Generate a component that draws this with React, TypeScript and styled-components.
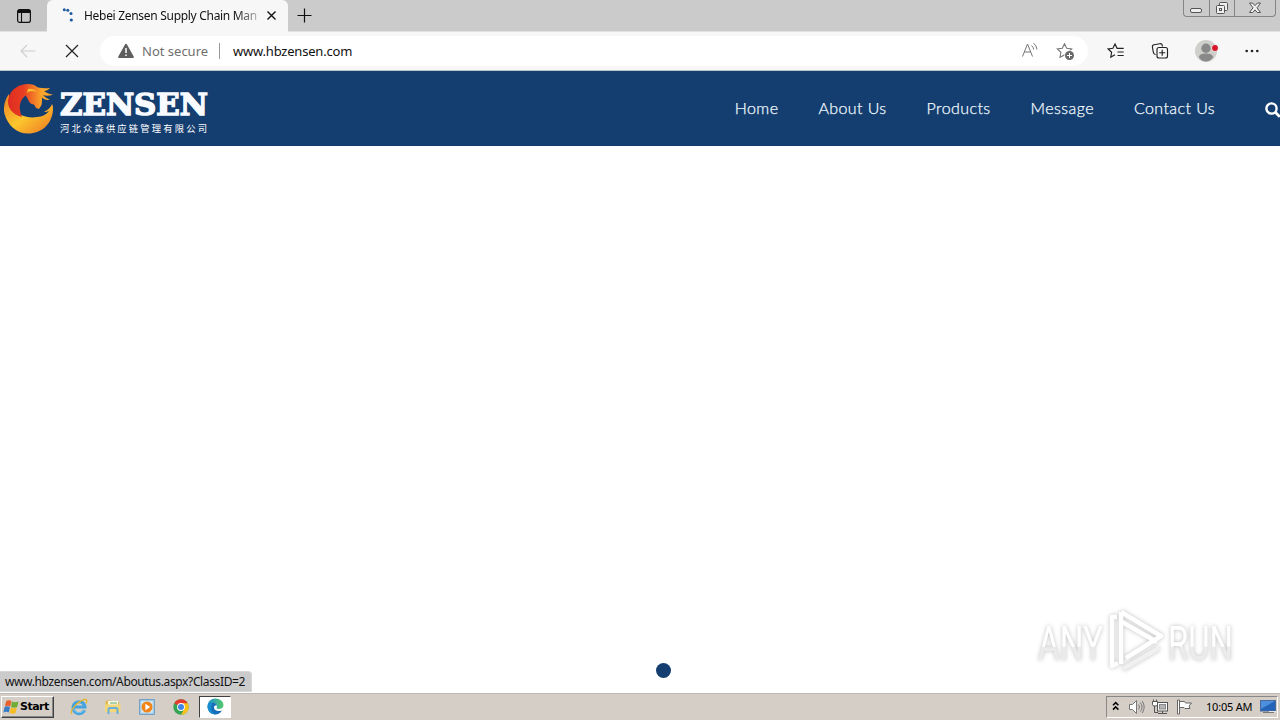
import styled, { createGlobalStyle, css } from "styled-components";

const navItems = ["Home", "About Us", "Products", "Message", "Contact Us"];

export default function App() {
  return (
    <>
      <GlobalStyle />
      <Desktop>
        <TabStrip>
          <TabActions>
            <svg width="16" height="16" viewBox="0 0 16 16">
              <rect x="1.6" y="1.6" width="12.8" height="12.8" rx="2.2" fill="none" stroke="#111" strokeWidth="1.2" />
              <path d="M1.5 5V3.5a2 2 0 0 1 2-2h9a2 2 0 0 1 2 2V5z" fill="#111" />
              <path d="M5.5 5v9" stroke="#111" strokeWidth="1.1" />
            </svg>
          </TabActions>
          <Tab>
            <svg width="12" height="15" viewBox="0 0 12 15" fill="#1e5aa0">
              <circle cx="2.3" cy="1.8" r="1.5" />
              <circle cx="5.8" cy="2.2" r="1.5" />
              <circle cx="9" cy="5.4" r="1.5" />
              <circle cx="9.3" cy="12" r="1.6" />
            </svg>
            <TabTitle>Hebei Zensen Supply Chain Man</TabTitle>
            <svg width="11" height="11" viewBox="0 0 11 11">
              <path d="M1.5 1.5l8 8M9.5 1.5l-8 8" stroke="#111" strokeWidth="1.4" />
            </svg>
          </Tab>
          <NewTab>
            <svg width="15" height="15" viewBox="0 0 15 15">
              <path d="M7.5 .5v14M.5 7.5h14" stroke="#111" strokeWidth="1.2" />
            </svg>
          </NewTab>
          <WindowButtons>
            <WindowButton $width={25}>
              <svg width="14" height="14" viewBox="0 0 14 14">
                <rect x="1.5" y="7.5" width="11" height="4" rx="1.5" fill="#eee" stroke="#555" />
              </svg>
            </WindowButton>
            <WindowButton $width={25}>
              <svg width="14" height="14" viewBox="0 0 14 14" fill="#eee" stroke="#555">
                <rect x="4.5" y="1.5" width="8" height="8" rx="1" />
                <rect x="1.5" y="4.5" width="8" height="8" rx="1" />
                <rect x="4.5" y="7.5" width="2" height="2" />
              </svg>
            </WindowButton>
            <WindowButton $width={41}>
              <svg width="14" height="14" viewBox="0 0 14 14">
                <path
                  d="M1.5 2h3.2L7 4.7 9.3 2h3.2L9 6.8l3.5 4.7H9.3L7 8.9l-2.3 2.6H1.5L5 6.8z"
                  fill="#eee"
                  stroke="#555"
                />
              </svg>
            </WindowButton>
          </WindowButtons>
        </TabStrip>

        <Toolbar>
          <ToolIcon $width={16} $left={20}>
            <svg width="16" height="14" viewBox="0 0 16 14">
              <path d="M15.5 7H1M7 1L1 7l6 6" fill="none" stroke="#cdcdcd" strokeWidth="1.1" />
            </svg>
          </ToolIcon>
          <ToolIcon $width={14} $left={29}>
            <svg width="14" height="14" viewBox="0 0 14 14">
              <path d="M1 1l12 12M13 1L1 13" stroke="#222" strokeWidth="1.2" />
            </svg>
          </ToolIcon>
          <AddressBar>
            <svg width="16" height="16" viewBox="0 0 16 16">
              <path d="M8 .8c.5 0 .8.2 1 .6l6.7 12c.4.8 0 1.6-.9 1.6H1.2c-.9 0-1.3-.8-.9-1.6L7 1.4c.2-.4.5-.6 1-.6z" fill="#5f5f5f" />
              <path d="M8 5v5M8 11.5v1.6" stroke="#fff" strokeWidth="1.5" />
            </svg>
            <Security>Not secure</Security>
            <Url>www.hbzensen.com</Url>
            <AddressTools>
              <svg width="18" height="16" viewBox="0 0 18 16" fill="none" stroke="#777" strokeWidth="1">
                <path d="M1.5 14.5L6.5 2l5 12.5M3.3 10h6.4M10.5 3.5q2 1.5 2.2 4M12.5 1.2q3.2 2.3 3.5 6.3" />
              </svg>
              <svg width="19" height="19" viewBox="0 0 19 19">
                <path
                  d="M8.5 1.7l2.2 4.5 5 .7-3.6 3.4.9 5-4.5-2.4L4 15.3l.9-5L1.3 6.9l5-.7z"
                  fill="none"
                  stroke="#777"
                  strokeWidth="1.1"
                />
                <circle cx="13.5" cy="13.5" r="5.2" fill="#fff" />
                <circle cx="13.5" cy="13.5" r="4.5" fill="#686868" />
                <path d="M13.5 11v5M11 13.5h5" stroke="#fff" />
              </svg>
            </AddressTools>
          </AddressBar>
          <ToolIcon $width={18} $left={19}>
            <svg width="18" height="18" viewBox="0 0 18 18" fill="none" stroke="#222" strokeWidth="1.15">
              <path d="M10 6.3L8 2 5.9 6.3l-4.7.7 3.4 3.3-.8 4.8L8 12.8M8 2l2.1 4.3h6.6M10.5 10h6.2M10.5 13.5h6.2" />
            </svg>
          </ToolIcon>
          <ToolIcon $width={18} $left={26}>
            <svg width="18" height="18" viewBox="0 0 18 18" fill="none" stroke="#222" strokeWidth="1.15">
              <path d="M4.5 12.6C3 12.5 2.5 11.5 2.3 10.2L1.4 5C1.2 3.7 2 3 3.1 2.8l5.7-1.1c1.2-.2 2.2.3 2.5 1.7l.2 1.1" />
              <rect x="6" y="5.5" width="10.5" height="10.5" rx="2" />
              <path d="M11.2 7.7v6M8.2 10.7h6" />
            </svg>
          </ToolIcon>
          <ToolIcon $width={24} $left={26}>
            <svg width="24" height="22" viewBox="0 0 24 22">
              <circle cx="11" cy="11" r="11" fill="#cfcfcb" />
              <circle cx="11" cy="8.2" r="4.7" fill="#898989" />
              <path d="M3.8 17c1-3 3.7-3.5 7.2-3.5s6.2.5 7.2 3.5c-2 3-4.4 4.5-7.2 4.5S5.5 20 3.8 17z" fill="#898989" />
              <circle cx="20" cy="8" r="3.5" fill="#e9e4e2" />
              <circle cx="20" cy="8" r="2.9" fill="#dc1428" />
            </svg>
          </ToolIcon>
          <ToolIcon $width={14} $left={26}>
            <svg width="14" height="4" viewBox="0 0 14 4" fill="#222">
              <circle cx="1.7" cy="2" r="1.3" />
              <circle cx="7" cy="2" r="1.3" />
              <circle cx="12.3" cy="2" r="1.3" />
            </svg>
          </ToolIcon>
        </Toolbar>

        <SiteHeader>
          <Logo />
          <Nav>
            {navItems.map((item) => (
              <NavLink key={item}>{item}</NavLink>
            ))}
          </Nav>
          <SearchButton>
            <svg width="16" height="16" viewBox="0 0 16 16">
              <circle cx="6.5" cy="6.5" r="5.1" fill="none" stroke="#fff" strokeWidth="2.4" />
              <path d="M10.3 10.3l4.5 4.5" stroke="#fff" strokeWidth="2.8" />
            </svg>
          </SearchButton>
        </SiteHeader>

        <Page>
          <SliderDot />
          <StatusBubble>www.hbzensen.com/Aboutus.aspx?ClassID=2</StatusBubble>
          <Watermark />
        </Page>

        <Taskbar>
          <StartButton>
            <WindowsFlag />
            Start
          </StartButton>
          <TaskButton>
            <ExplorerIcon />
          </TaskButton>
          <TaskButton>
            <FolderIcon />
          </TaskButton>
          <TaskButton>
            <PlayerIcon />
          </TaskButton>
          <TaskButton>
            <ChromeIcon />
          </TaskButton>
          <TaskButton $active>
            <EdgeIcon />
          </TaskButton>
          <Tray>
            <Chevrons width="8" height="10" viewBox="0 0 8 10" fill="none" stroke="#000" strokeWidth="1.5">
              <path d="M1 4.3L3.7 1.6l2.7 2.7M1 8.6l2.7-2.7 2.7 2.7" />
            </Chevrons>
            <SpeakerIcon />
            <NetworkIcon />
            <FlagIcon />
            <Clock>10:05 AM</Clock>
            <svg width="17" height="14" viewBox="0 0 17 14">
              <rect x=".5" y=".5" width="15" height="10.5" fill="#2463b8" stroke="#4a6a9c" />
              <path d="M1 1h14L1 9z" fill="#4b8fdd" />
              <path d="M3 12.5h11" stroke="#777" />
              <path d="M9 11.5h7" stroke="#e8e8e8" />
            </svg>
          </Tray>
        </Taskbar>
      </Desktop>
    </>
  );
}

function Logo() {
  return (
    <LogoLink>
      <svg width="212" height="56" viewBox="0 0 212 56">
        <defs>
          <linearGradient id="ring" x1="0" y1="0" x2="1" y2="1">
            <stop offset="0" stopColor="#ef7d22" />
            <stop offset=".5" stopColor="#fbc62e" />
            <stop offset="1" stopColor="#ee7421" />
          </linearGradient>
          <linearGradient id="mane" x1="0" y1="0" x2="1" y2="0">
            <stop offset="0" stopColor="#df2c22" />
            <stop offset=".35" stopColor="#e83f22" />
            <stop offset=".75" stopColor="#fba52b" />
          </linearGradient>
        </defs>
        <path
          d="M9 14C5 19 3 27 4.5 34 8 46 17 53.500 28 53.5 42 53.5 52 44 53 30c.2-3-.2-4-1-6-1 3-4 6-8 8 2 0 4-.5 5-1-2 3-7 6-12 6-6 1-11 0-16-2C13 35 9 27 9 14z"
          fill="url(#ring)"
        />
        <path
          d="M22 37C13 35 6 27 8.5 18 11 9 19 4 28 4c4 0 7 1 10 3.500 4 .8 8 1 12 .5-1.5 2-4 3-6 3 3 2 6 3.500 9 3.500-3 1.500-7 1.500-10 .5 2 2 4 4 7 4.500-3 1-6 0-8-2 0 3 0 5-.5 7.500L39 29l-3-1-2-3.500c-2 0-4-1-5-3l-2-4-1.500-2C21 19 19 25 20 30c.5 3 1 5 2 7z"
          fill="url(#mane)"
        />
        <path d="M27 13l1-4q5-1 9 3l-4-1q-4-.5-6 2z" fill="#fac22f" />
        <text
          x="60"
          y="34.5"
          textLength="148"
          lengthAdjust="spacingAndGlyphs"
          fill="#f7fbff"
          stroke="#f7fbff"
          strokeWidth="1.5"
          fontFamily="DejaVu Serif, serif"
          fontWeight="700"
          fontSize="30"
        >
          ZENSEN
        </text>
        <text
          x="60"
          y="51.5"
          textLength="147"
          fill="#fff"
          fontFamily="Noto Sans CJK SC, sans-serif"
          fontWeight="400"
          fontSize="9.3"
        >
          河北众森供应链管理有限公司
        </text>
      </svg>
    </LogoLink>
  );
}

function Watermark() {
  return (
    <WatermarkBox>
      <svg width="220" height="72" viewBox="0 0 220 72">
        <defs>
          <linearGradient id="fade" x1="0" y1="0" x2="0" y2="1">
            <stop offset=".55" stopColor="#fff" />
            <stop offset=".56" stopColor="#ebebeb" />
          </linearGradient>
        </defs>
        <g fill="url(#fade)" fontFamily="Roboto, sans-serif" fontSize="49" fontWeight="400">
          <text x="7" y="54" textLength="65" lengthAdjust="spacingAndGlyphs">ANY</text>
          <text x="137" y="54" textLength="65" lengthAdjust="spacingAndGlyphs">RUN</text>
        </g>
        <g fill="none" stroke="#fff" strokeWidth="4.5" strokeLinejoin="round">
          <path d="M86 11h-5v49l6-3" />
          <path d="M90 6v52M90 6l40 24-35 22M91 16l35 20" />
          <path d="M92 63l36-21" stroke="#f0f0f0" />
        </g>
      </svg>
    </WatermarkBox>
  );
}

function WindowsFlag() {
  return (
    <svg width="16" height="16" viewBox="0 0 16 16">
      <path d="M3.2 2q2.6-1.6 5.2 0L7.3 7.4q-2.6-1.5-5.4 0z" fill="#e9602a" />
      <path d="M9 2.5q3.2 1.5 6.5 0l-1.3 5.4q-2.9 1.5-6.2 0z" fill="#6fad35" />
      <path d="M1.6 8.1q2.8-1.5 5.4 0l-1.2 5.3q-2.8-1.5-5.4 0z" fill="#397bc5" />
      <path d="M7.7 8.6q3 1.5 6.2 0l-1.3 5.5q-3 1.5-6.1 0z" fill="#f6bd26" />
    </svg>
  );
}

function ExplorerIcon() {
  return (
    <svg width="18" height="18" viewBox="0 0 18 18" fill="none">
      <path d="M14.5 12.2A6 6 0 1 1 15 9H4" stroke="#43a3df" strokeWidth="3" />
      <path d="M14 12.3A6 6 0 0 1 3.5 11" stroke="#7cc8f0" strokeWidth="1" />
      <path d="M2 16C-1 13 8 3 14.5 1.5c3-.6 2.5 2 1.5 4" stroke="#e5b42d" strokeWidth="1.3" />
    </svg>
  );
}

function FolderIcon() {
  return (
    <svg width="18" height="16" viewBox="0 0 18 16">
      <path d="M1.5 2.5l1-1h4l1 1.5h7.5v10h-13.5z" fill="#dfba4d" />
      <path d="M4 2h10v5H4z" fill="#f9f5df" />
      <path d="M6 4h7" stroke="#59ae75" />
      <path d="M1 5.5h15.5V13H1z" fill="#f3d679" />
      <path d="M4.5 15v-4.5Q4.500 9 6 9h6q1.500 0 1.500 1.500V15" fill="none" stroke="#69b0d8" strokeWidth="2" />
    </svg>
  );
}

function PlayerIcon() {
  return (
    <svg width="16" height="16" viewBox="0 0 16 16">
      <rect x=".7" y=".7" width="14.6" height="14.6" fill="#b6d7ed" stroke="#6096c4" />
      <rect x="2.5" y="2.5" width="11" height="11" fill="#d8e9f4" />
      <circle cx="8" cy="8" r="5.5" fill="#f28418" />
      <path d="M6.4 4.8L11.2 8l-4.8 3.2z" fill="#fff" />
    </svg>
  );
}

function ChromeIcon() {
  return (
    <svg width="16" height="16" viewBox="0 0 16 16">
      <circle cx="8" cy="8" r="7.7" fill="#34a353" />
      <path d="M8 8L1.3 4.2A7.7 7.7 0 0 1 14.7 4.2z" fill="#e33b2e" />
      <path d="M8 4.2h6.7A7.7 7.7 0 0 1 8 15.7L11.3 10z" fill="#fbc116" />
      <circle cx="8" cy="8" r="3.9" fill="#fff" />
      <circle cx="8" cy="8" r="3" fill="#4285e8" />
    </svg>
  );
}

function EdgeIcon() {
  return (
    <svg width="17" height="17" viewBox="0 0 17 17">
      <defs>
        <linearGradient id="edge" x1="0" y1="0" x2="1" y2="0">
          <stop offset="0" stopColor="#208fd4" />
          <stop offset="1" stopColor="#55ca69" />
        </linearGradient>
      </defs>
      <path d="M.5 8.5C.5 3.7 4 .5 8.5.5s8 3 8 6.5c0 2.5-2 4-4.5 4-1.8 0-2.8-.7-2.3-1.5.5-.9.7-3.5-2.2-4C4 5 1.5 7 .5 8.5z" fill="url(#edge)" />
      <path d="M.5 8.5C1 6 3.5 4.5 6 4.7 8 4.8 10 6 10 8c-1-1-3-.5-3 1.5 0 3 3.5 4.5 8 3-1.5 2.5-4 4-6.5 4-4.5 0-8-3.6-8-8z" fill="#176eb9" />
      <path d="M5 7c-2 3-.5 7.5 3.5 9.5-4.5 0-8-3.6-8-8C1 6.5 3 5 5 5z" fill="#168ed0" />
    </svg>
  );
}

function SpeakerIcon() {
  return (
    <svg width="17" height="16" viewBox="0 0 17 16" fill="none" stroke="#777">
      <path d="M1.5 5.5h3l4-4v13l-4-4h-3z" fill="#fff" />
      <path d="M10.5 5.5q2 2.5 0 5M12.3 3.5q3.5 4.5 0 9M14.2 2q4 6 0 12" />
    </svg>
  );
}

function NetworkIcon() {
  return (
    <svg width="17" height="16" viewBox="0 0 17 16" stroke="#555">
      <rect x="5.5" y="3.5" width="10" height="8.5" fill="#fff" />
      <rect x="7.5" y="5.5" width="6" height="4.5" fill="#b5b5b5" stroke="#888" />
      <path d="M6 14.5h9M10.5 12v2" />
      <path d="M2.5 7v6.5H6" fill="none" />
      <path d="M1.5 3V.5M4.5 3V.5M.5 2.5h5v3l-1 1.5h-3l-1-1.5z" fill="#fff" />
    </svg>
  );
}

function FlagIcon() {
  return (
    <svg width="17" height="16" viewBox="0 0 17 16" fill="#fff" stroke="#666">
      <path d="M1.5 1h2v14h-2z" />
      <path d="M3.5 2.5h5l1 1.5h6L13 7l1 2.5H9l-1-1H3.5z" />
    </svg>
  );
}

const GlobalStyle = createGlobalStyle`
  * {
    box-sizing: border-box;
  }
  body {
    margin: 0;
    overflow: hidden;
    background: #fff;
    font-family: "Noto Sans", sans-serif;
  }
  svg {
    display: block;
    flex-shrink: 0;
  }
`;

const Desktop = styled.div`
  width: 1280px;
  height: 720px;
  display: flex;
  flex-direction: column;
  overflow: hidden;
`;

const TabStrip = styled.div`
  height: 32px;
  display: flex;
  align-items: flex-start;
  background: #cbcbcb;
  border-bottom: 1px solid #e2e2e2;
`;

const TabActions = styled.div`
  width: 47px;
  height: 31px;
  padding: 8px 0 0 16px;
  background: #c6c6c6;
  border-bottom-right-radius: 6px;
`;

const Tab = styled.div`
  width: 241px;
  height: 32px;
  display: flex;
  align-items: center;
  padding: 0 11px 1px 15px;
  background: #f7f7f7;
  border-radius: 6px 6px 0 0;
`;

const TabTitle = styled.div`
  width: 176px;
  margin: 0 6px 0 10px;
  white-space: nowrap;
  font-size: 12px;
  letter-spacing: -0.3px;
  color: #111;
  mask-image: linear-gradient(90deg, #000 152px, transparent 182px);
`;

const NewTab = styled.div`
  flex: 1;
  padding: 8px 0 0 9px;
`;

const WindowButtons = styled.div`
  height: 17px;
  display: flex;
  margin-right: 4px;
  border: 1px solid #858585;
  border-top: 0;
  border-radius: 0 0 4px 4px;
`;

const WindowButton = styled.div<{ $width: number }>`
  width: ${({ $width }) => $width}px;
  height: 16px;
  display: flex;
  align-items: center;
  justify-content: center;
  padding-right: 1px;

  & + & {
    border-left: 1px solid #858585;
  }
`;

const Toolbar = styled.div`
  height: 39px;
  display: flex;
  align-items: center;
  background: #f7f7f7;
  border-bottom: 1px solid #bcc5cb;
`;

const ToolIcon = styled.div<{ $width: number; $left: number }>`
  width: ${({ $width }) => $width}px;
  margin-left: ${({ $left }) => $left}px;
`;

const AddressBar = styled.div`
  width: 988px;
  height: 30px;
  display: flex;
  align-items: center;
  margin-left: 21px;
  padding: 0 13px 0 18px;
  background: #fff;
  border-radius: 15px;
  font-size: 13px;
`;

const Security = styled.div`
  width: 78px;
  height: 16px;
  margin-left: 8px;
  border-right: 1px solid #999;
  line-height: 16px;
  white-space: nowrap;
  color: #707070;
`;

const Url = styled.div`
  margin-left: 13px;
  line-height: 16px;
  letter-spacing: -0.2px;
  color: #111;
`;

const AddressTools = styled.div`
  display: flex;
  gap: 17px;
  margin-left: auto;
`;

const SiteHeader = styled.div`
  height: 75px;
  display: flex;
  align-items: center;
  background: #153e70;
`;

const LogoLink = styled.div`
  height: 56px;
  margin-top: -1px;
`;

const Nav = styled.div`
  display: flex;
  gap: 40px;
  margin: -2px 0 0 auto;
  font-family: Lato, sans-serif;
  font-size: 16px;
  font-weight: 300;
  letter-spacing: 0.42px;
  line-height: 20px;
  color: #f4fbff;
  -webkit-text-stroke: 0.25px #f4fbff;
`;

const NavLink = styled.div`
  white-space: nowrap;
`;

const SearchButton = styled.div`
  width: 15px;
  margin: 2px 0 0 50px;
  overflow: hidden;
`;

const Page = styled.div`
  height: 547px;
  position: relative;
  background: #fff;
`;

const SliderDot = styled.div`
  position: absolute;
  left: 656px;
  top: 517px;
  width: 15px;
  height: 15px;
  border-radius: 50%;
  background: #153e70;
`;

const StatusBubble = styled.div`
  position: absolute;
  left: 0;
  bottom: 1px;
  width: 252px;
  height: 21px;
  padding-left: 5px;
  background: #cbcbcb;
  border: 1px solid #d8d8d8;
  border-left: 0;
  border-top-right-radius: 4px;
  font-size: 12px;
  letter-spacing: -0.37px;
  line-height: 19px;
  white-space: nowrap;
  color: #111;
`;

const WatermarkBox = styled.div`
  position: absolute;
  left: 1031px;
  top: 460px;
  filter: drop-shadow(0 0 2px rgba(0, 0, 0, 0.26));
`;

const Taskbar = styled.div`
  height: 27px;
  display: flex;
  align-items: center;
  padding: 0 2px 1px 1px;
  background: #d4cec7;
  border-top: 1px solid #bdbab6;
`;

const bevel = css`
  border: 1px solid;
  border-color: #fff #404040 #404040 #fff;
  box-shadow: inset -1px -1px #888;
`;

const StartButton = styled.div`
  ${bevel}
  width: 53px;
  height: 22px;
  display: flex;
  align-items: center;
  gap: 1px;
  margin-right: 9px;
  padding-left: 1px;
  font-family: "DejaVu Sans", sans-serif;
  font-size: 11px;
  font-weight: 700;
  letter-spacing: -0.5px;
  color: #000;
`;

const TaskButton = styled.div<{ $active?: boolean }>`
  width: 32px;
  height: 22px;
  display: flex;
  align-items: center;
  justify-content: center;
  margin-right: 2px;

  ${({ $active }) =>
    $active &&
    css`
      background: #fff;
      border: 1px solid;
      border-color: #404040 #fff #fff #404040;
    `}
`;

const Tray = styled.div`
  width: 172px;
  height: 22px;
  display: flex;
  align-items: center;
  gap: 7px;
  margin-left: auto;
  padding-left: 5px;
  border: 1px solid;
  border-color: #888 #fff #fff #888;
`;

const Chevrons = styled.svg`
  margin: 0 1px 2px 0;
`;

const Clock = styled.div`
  width: 47px;
  margin-left: 6px;
  font-size: 11px;
  letter-spacing: -0.2px;
  white-space: nowrap;
  color: #000;
`;
